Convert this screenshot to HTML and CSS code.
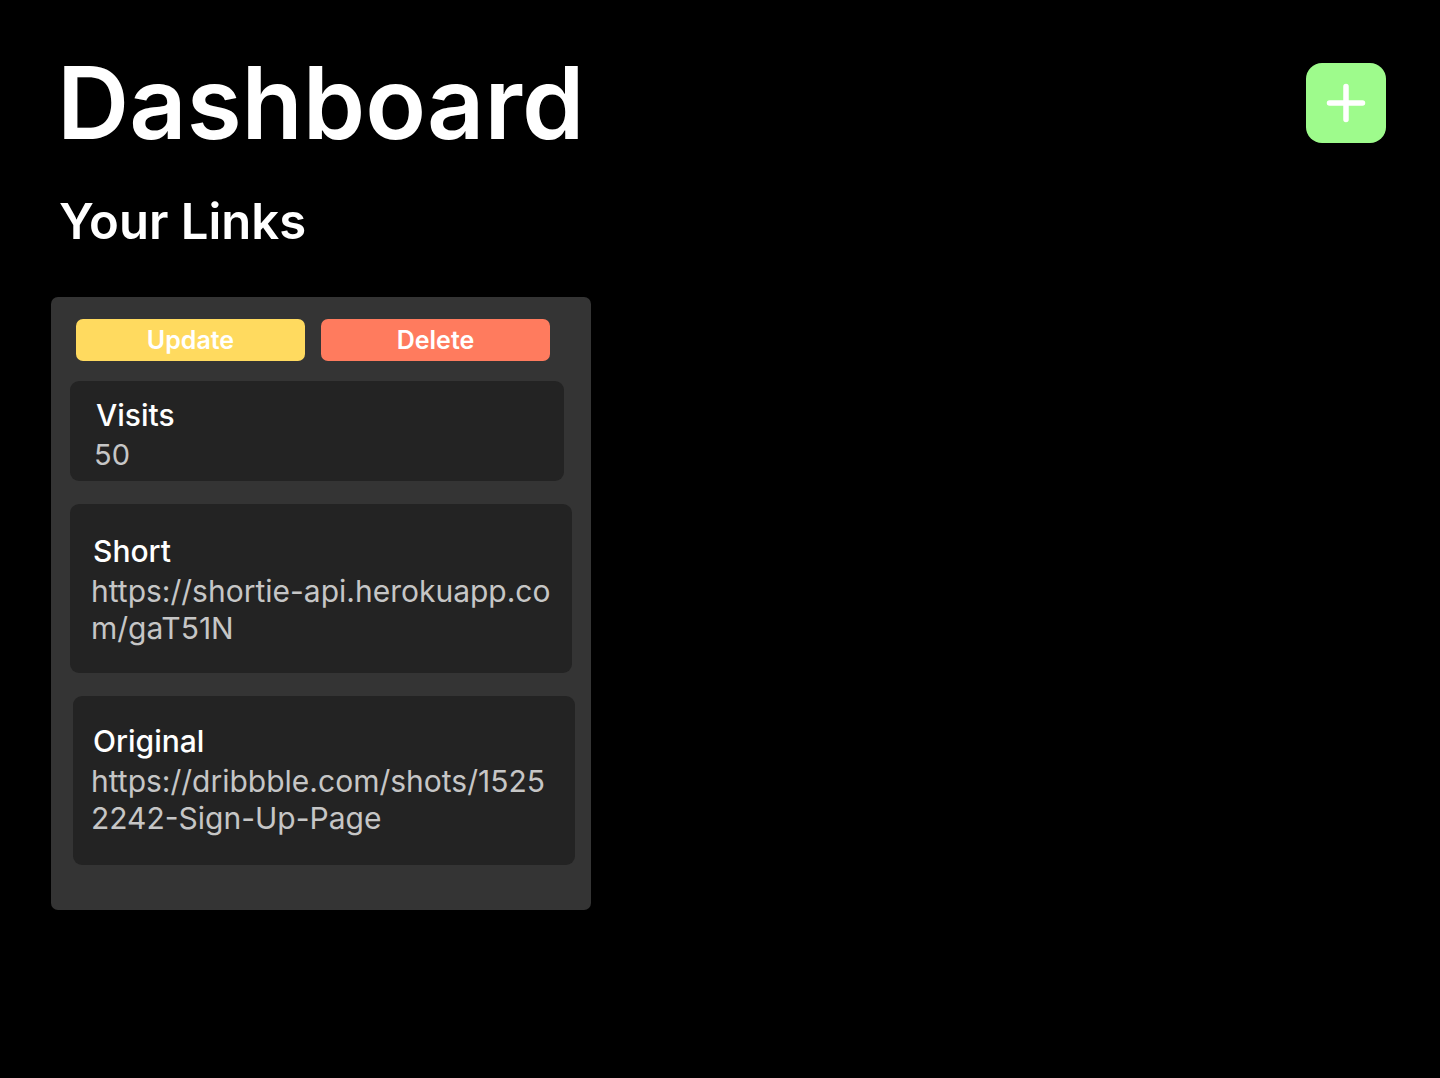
FILE: index.html
```html
<!DOCTYPE html>
<html lang="en">
<head>
<meta charset="utf-8">
<title>Dashboard</title>
<link rel="stylesheet" href="styles.css">
</head>
<body>
<main class="page">
  <header class="top">
    <h1 class="title">Dashboard</h1>
    <button class="add" type="button" aria-label="Add link">
      <svg class="add-icon" width="40" height="40" viewBox="0 0 40 40" aria-hidden="true">
        <path d="M20 3.5V36.5M3.5 20H36.5" stroke="#fff" stroke-width="5.5" stroke-linecap="round" fill="none"/>
      </svg>
    </button>
  </header>
  <h2 class="subtitle">Your Links</h2>
  <section class="cards">
    <article class="card">
      <div class="actions">
        <button class="btn btn-update" type="button">Update</button>
        <button class="btn btn-delete" type="button">Delete</button>
      </div>
      <div class="field field-visits">
        <h3 class="field-label">Visits</h3>
        <p class="field-value">50</p>
      </div>
      <div class="field field-short">
        <h3 class="field-label">Short</h3>
        <p class="field-value field-url">https://shortie-api.herokuapp.com/gaT51N</p>
      </div>
      <div class="field field-original">
        <h3 class="field-label">Original</h3>
        <p class="field-value field-url">https://dribbble.com/shots/15252242-Sign-Up-Page</p>
      </div>
    </article>
  </section>
</main>
</body>
</html>
```

FILE: styles.css
```css
* { box-sizing: border-box; }

html, body {
  margin: 0;
  padding: 0;
  background: #000;
}

body {
  font-family: Inter, "Noto Sans", "Liberation Sans", sans-serif;
  color: #fff;
  min-height: 1078px;
}

.page {
  padding: 53px 54px 0 51px;
}

.top {
  display: flex;
  align-items: center;
  justify-content: space-between;
  height: 100px;
}

.title {
  margin: 0 0 0 6px;
  font-size: 100px;
  line-height: 100px;
  font-weight: 600;
}

.add {
  width: 80px;
  height: 80px;
  border: 0;
  border-radius: 16px;
  background: #9efb8c;
  display: flex;
  align-items: center;
  justify-content: center;
  padding: 0;
  cursor: pointer;
}

.add-icon { display: block; }

.subtitle {
  margin: 39px 0 0 8px;
  font-size: 49px;
  line-height: 60px;
  font-weight: 600;
}

.cards {
  margin-top: 45px;
  display: flex;
}

.card {
  width: 540px;
  background: #343434;
  border-radius: 7px;
  padding: 22px 19px 45px 19px;
}

.actions {
  display: flex;
  gap: 16px;
  padding-left: 6px;
  margin-bottom: 20px;
}

.btn {
  width: 229px;
  height: 42px;
  border: 0;
  border-radius: 7px;
  font-family: inherit;
  font-size: 25px;
  line-height: 42px;
  font-weight: 600;
  color: #fff;
  padding: 0;
  cursor: pointer;
}

.btn-update { background: #ffda5f; }
.btn-delete { background: #ff7b5e; }

.field {
  background: #232323;
  border-radius: 9px;
}

.field-label {
  margin: 0 0 0 2px;
  font-size: 30px;
  line-height: 36px;
  font-weight: 500;
  color: #fff;
}

.field-value {
  margin: 0;
  font-size: 29px;
  line-height: 36px;
  font-weight: 400;
  color: #c6c6c6;
}

.field-visits {
  width: 494px;
  height: 100px;
  padding: 16px 0 0 24px;
}

.field-visits .field-value { margin-top: 4px; }

.field-url {
  font-size: 30px;
  line-height: 36.5px;
  word-break: break-all;
}

.field-short {
  width: 502px;
  height: 169px;
  margin-top: 23px;
  padding: 29px 11px 0 21px;
}

.field-short .field-url { margin-top: 4px; }

.field-original {
  width: 502px;
  height: 169px;
  margin: 23px 0 0 3px;
  padding: 27px 14px 0 18px;
}

.field-original .field-url { margin-top: 4px; }
```
